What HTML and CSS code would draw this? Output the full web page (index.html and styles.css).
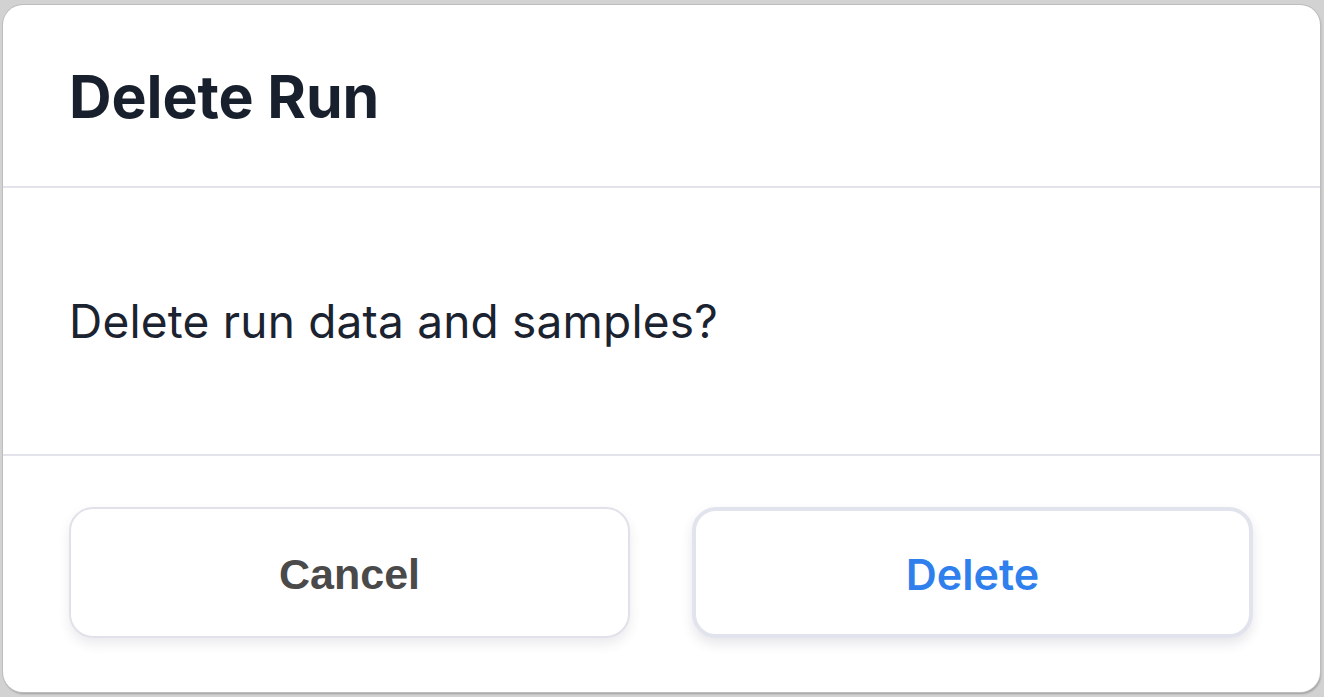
FILE: index.html
```html
<!DOCTYPE html>
<html>
<head>
<meta charset="utf-8">
<link rel="stylesheet" href="styles.css">
</head>
<body>
<div class="dialog">
  <div class="header"><h1 class="title">Delete Run</h1></div>
  <div class="content"><p class="message">Delete run data and samples?</p></div>
  <div class="footer">
    <button class="btn btn-cancel">Cancel</button>
    <button class="btn btn-delete">Delete</button>
  </div>
</div>
</body>
</html>
```
FILE: styles.css
```css
html, body { margin: 0; padding: 0; }
body {
  width: 1324px;
  height: 697px;
  background: #d2d2d2;
  box-sizing: border-box;
  padding: 5px 4px 5px 3px;
  font-family: Inter, "Noto Sans", sans-serif;
}
.dialog {
  box-sizing: border-box;
  height: 687px;
  background: #fff;
  border-radius: 20px;
  box-shadow: 0 0 0 1px #bdbdbd, 1px 2px 2px rgba(0,0,0,0.25);
  display: flex;
  flex-direction: column;
  overflow: hidden;
}
.header {
  height: 183px;
  flex: none;
  display: flex;
  align-items: center;
  padding: 0 66px;
  border-bottom: 2px solid #e3e3eb;
  box-sizing: border-box;
}
.title {
  margin: 0;
  font-size: 59px;
  font-weight: 700;
  color: #17202c;
  letter-spacing: -0.1px;
  position: relative;
  top: 1px;
}
.content {
  height: 268px;
  flex: none;
  display: flex;
  align-items: center;
  padding: 0 66px;
  border-bottom: 2px solid #e3e3eb;
  box-sizing: border-box;
}
.message {
  margin: 0;
  font-size: 46px;
  font-weight: 400;
  color: #1b2230;
  letter-spacing: 0.2px;
}
.footer {
  flex: 1;
  display: flex;
  gap: 62px;
  padding: 51px 67px 0 66px;
}
.btn {
  width: 561px;
  height: 131px;
  box-sizing: border-box;
  background: #fff;
  border-radius: 24px;
  cursor: pointer;
  padding-top: 4px;
}
.btn-cancel {
  border: 2px solid #e1e1ea;
  font-family: "Liberation Sans", Arial, sans-serif;
  font-weight: 700;
  font-size: 43px;
  color: #4a4a4a;
  box-shadow: 0 6px 12px rgba(60,60,90,0.10);
}
.btn-delete {
  border: 4px solid #e1e4ec;
  font-family: Inter, "Noto Sans", sans-serif;
  font-weight: 600;
  font-size: 43px;
  color: #2f80ed;
  box-shadow: 0 6px 12px rgba(60,60,90,0.12);
}
```
